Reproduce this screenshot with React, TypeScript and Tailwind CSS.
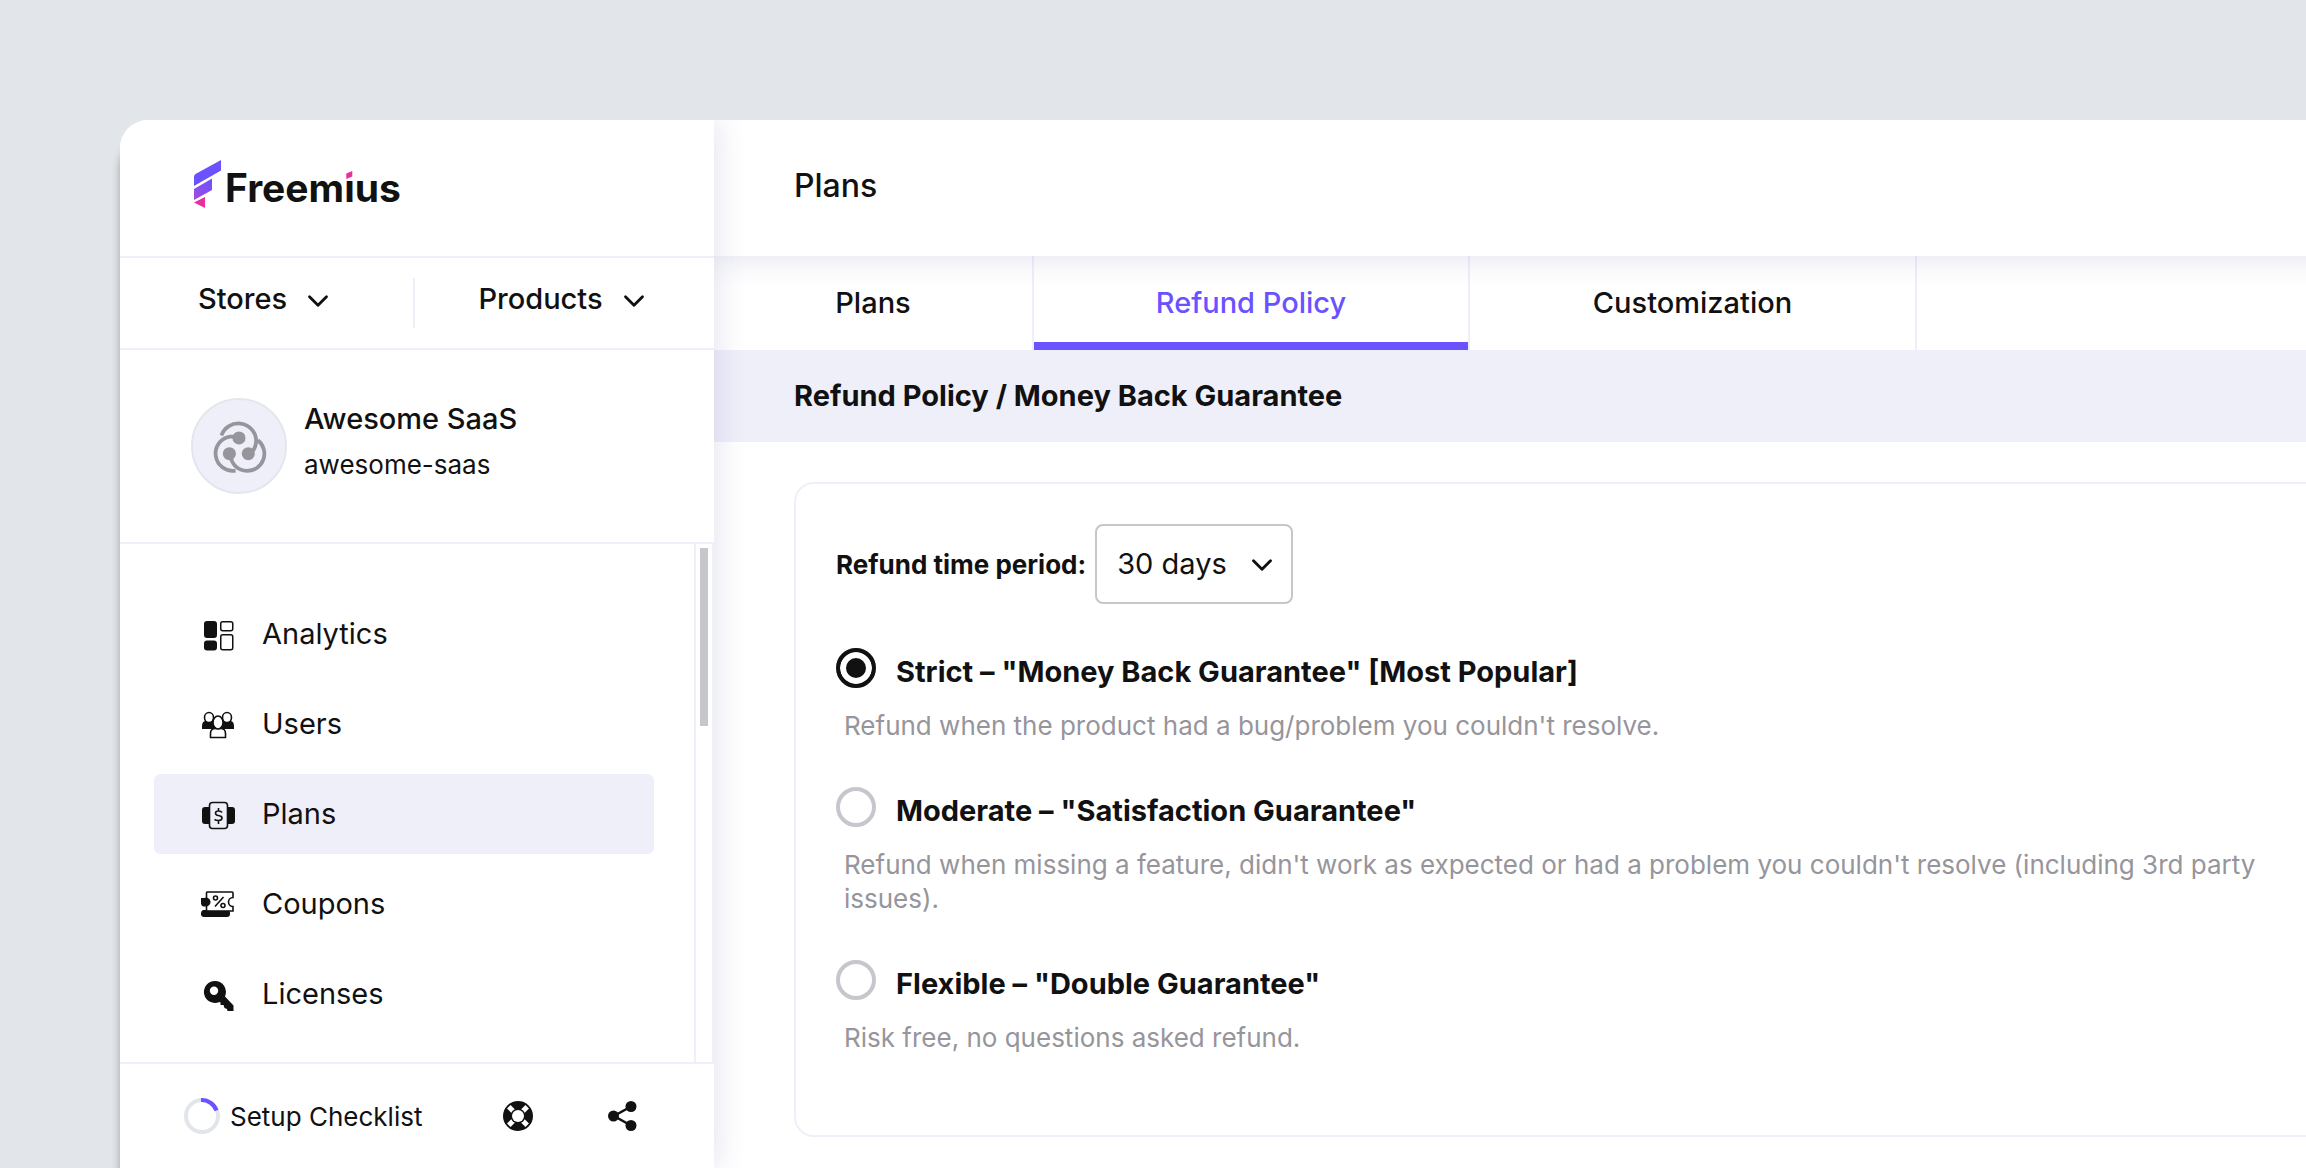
import React, { useState } from 'react';
import { ChevronDown } from 'lucide-react';

const AnalyticsIcon = () => (
  <svg viewBox="0 0 32 32" className="size-8" fill="none" stroke="#111" strokeWidth="1.5">
    <rect x="2" y="1" width="13" height="17" rx="3" fill="#111" stroke="none" />
    <rect x="2" y="20.5" width="13" height="10" rx="3" fill="#111" stroke="none" />
    <rect x="18.75" y="1.75" width="12" height="9" rx="2" />
    <rect x="18.75" y="14.75" width="12" height="15" rx="2" />
  </svg>
);

const UsersIcon = () => (
  <svg viewBox="0 0 32 32" className="size-8" fill="none" stroke="#111" strokeWidth="1.6">
    <path d="M0 19v-3q0-5 4-5h24q4 0 4 5v3z" fill="#111" stroke="none" />
    <ellipse cx="7" cy="7.5" rx="4.5" ry="5" fill="#fff" />
    <ellipse cx="25" cy="7.5" rx="4.5" ry="5" fill="#fff" />
    <path d="M8.500 27.500v-4q0-5 5-5h5q5 0 5 5v4z" fill="#fff" />
    <ellipse cx="16" cy="12.500" rx="5" ry="6.500" fill="#fff" />
  </svg>
);

const PlansIcon = () => (
  <svg viewBox="0 0 32 32" className="size-8 overflow-visible" fill="none" stroke="#111" strokeWidth="1.6">
    <rect x="0" y="7" width="12" height="17" rx="3" fill="#111" stroke="none" />
    <rect x="21" y="7" width="12" height="17" rx="3" fill="#111" stroke="none" />
    <rect x="7.500" y="2.500" width="18" height="26" rx="3" fill="#efeffa" />
    <path d="M16.500 8v3M16.500 20v4M20 12.500Q19 11 16.500 11 13.500 11 13.500 13.200 13.500 15 16.500 15.500 20 16 20 18 20 20.500 16.500 20.500 14 20.500 12.500 19.500" />
  </svg>
);

const CouponsIcon = () => (
  <svg viewBox="0 0 32 32" className="size-8 overflow-visible" fill="none" stroke="#111" strokeWidth="1.6">
    <path d="M1 20h24q3 0 3 3v1q0 3-3 3H2q-3 0-3-3v-1q0-2 2-3z" fill="#111" stroke="none" />
    <path d="M5 2h25q1 0 1 1v4.500a4.500 4.500 0 0 0 0 9V21H4.500V3q0-1 .5-1z" fill="#fff" />
    <path d="M-1 8h3a4.500 4.500 0 1 1 2 8.500H1q-2-1-2-3z" fill="#111" stroke="none" />
    <circle cx="13.500" cy="8" r="2" />
    <circle cx="21" cy="15.500" r="2" />
    <path d="M21.500 7 13 16.500" />
  </svg>
);

const LicensesIcon = () => (
  <svg viewBox="0 0 32 32" className="size-8">
    <path
      d="M13 1a11 11 0 1 0 4.500 21l1 .5V25h3l1 3 2.500 1 .5 2h6v-5.500L23 16.500A11 11 0 0 0 13 1zm-1 5.500a4.200 4.200 0 1 1 0 8.400 4.200 4.200 0 0 1 0-8.400z"
      fill="#111"
      fillRule="evenodd"
    />
  </svg>
);

const ProductLogo = () => (
  <svg viewBox="76 82 168 160" className="h-[55px] w-[58px] overflow-visible" fill="none" stroke="#96959b" strokeWidth="11">
    <path d="M109 130A52 52 0 0 1 210 143q0 27-20 42" />
    <path d="M160 133H134A50 50 0 1 0 150 232" />
    <path d="M215 144A50 50 0 0 1 184 233Q142 231 134 186" />
    <g fill="#96959b" stroke="none">
      <circle cx="160" cy="137" r="19" />
      <circle cx="132" cy="183" r="19" />
      <circle cx="187" cy="183" r="19" />
    </g>
  </svg>
);

const SupportIcon = () => (
  <svg viewBox="0 0 32 32" className="size-8">
    <circle cx="16" cy="16" r="15" fill="#111" />
    <path
      d="M6.800 6.800 11.500 11.500M25.200 6.800 20.500 11.500M6.800 25.200 11.500 20.500M25.200 25.200 20.500 20.500"
      stroke="#fff"
      strokeWidth="5"
    />
    <circle cx="16" cy="16" r="7.500" fill="#111" />
    <circle cx="16" cy="16" r="6" fill="#fff" />
  </svg>
);

const ShareIcon = () => (
  <svg viewBox="0 0 32 32" className="size-8" fill="#111">
    <path d="M25 6.500 8 16l17 9.500" fill="none" stroke="#111" strokeWidth="2.500" />
    <circle cx="25" cy="6.500" r="5.500" />
    <circle cx="7.500" cy="16" r="5.500" />
    <circle cx="25" cy="25.500" r="5.500" />
  </svg>
);

const FreemiusMark = () => (
  <svg viewBox="0 0 27 48" className="h-12 w-[27px]">
    <defs>
      <linearGradient id="mark" x1="1" y1="0" x2="0" y2="1">
        <stop offset="0" stopColor="#6b52ff" />
        <stop offset="1" stopColor="#a04be0" />
      </linearGradient>
    </defs>
    <path d="M0 16.500Q0 15 1.500 14L27 0v10.500L0 26z" fill="#6b52ff" />
    <path d="M0 29 18 18.500V30L0 40z" fill="url(#mark)" />
    <path d="M0 42.500 11 37v11z" fill="#ea2e9c" />
  </svg>
);

const navItems = [
  { name: 'Analytics', icon: AnalyticsIcon },
  { name: 'Users', icon: UsersIcon },
  { name: 'Plans', icon: PlansIcon },
  { name: 'Coupons', icon: CouponsIcon },
  { name: 'Licenses', icon: LicensesIcon },
];

const tabs = [
  { name: 'Plans', width: 'min-w-80' },
  { name: 'Refund Policy', width: 'min-w-[436px]' },
  { name: 'Customization', width: 'min-w-[447px]' },
];

const policies = [
  {
    id: 'strict',
    title: 'Strict – "Money Back Guarantee" [Most Popular]',
    description: "Refund when the product had a bug/problem you couldn't resolve.",
  },
  {
    id: 'moderate',
    title: 'Moderate – "Satisfaction Guarantee"',
    description:
      "Refund when missing a feature, didn't work as expected or had a problem you couldn't resolve (including 3rd party issues).",
  },
  {
    id: 'flexible',
    title: 'Flexible – "Double Guarantee"',
    description: 'Risk free, no questions asked refund.',
  },
];

const Sidebar: React.FC = () => (
  <aside className="relative z-20 flex w-[594px] shrink-0 flex-col bg-white shadow-[0_0_30px_rgba(70,70,150,0.18)]">
    {/* Logo */}
    <div className="flex h-[138px] items-center border-b-2 border-[#efeffa] pl-[74px]">
      <a href="#" className="flex items-center gap-1 pb-2">
        <FreemiusMark />
        <span className="pt-1.5 text-[39px] leading-none font-bold">
          Freem
          <span className="relative">
            i
            {/* Pink slanted dot over the letter */}
            <svg viewBox="0 0 10 10" className="absolute top-[6px] left-0 h-2.5 w-full">
              <rect width="10" height="10" fill="#fff" />
              <path d="M2 3.500 8 1v5.500L2 9z" fill="#ea2e9c" />
            </svg>
          </span>
          us
        </span>
      </a>
    </div>

    {/* Switchers */}
    <div className="flex h-[92px] border-b-2 border-[#efeffa] py-5">
      <button className="flex w-[295px] items-center justify-center gap-3.5 border-r-2 border-[#efeffa] pb-2 text-[29px] font-medium">
        Stores
        <ChevronDown size={34} strokeWidth={2} className="mt-1" />
      </button>
      <button className="flex flex-1 items-center justify-center gap-3.5 pb-2 text-[29px] font-medium">
        Products
        <ChevronDown size={34} strokeWidth={2} className="mt-1" />
      </button>
    </div>

    {/* Current product */}
    <div className="flex h-[194px] items-center gap-[17px] border-b-2 border-[#efeffa] pl-[71px]">
      <div className="flex size-24 items-center justify-center rounded-full border-2 border-[#e4e6ee] bg-[#efeffa]">
        <ProductLogo />
      </div>
      <div className="pb-2">
        <p className="pb-1.5 text-[29px] leading-10 font-medium">Awesome SaaS</p>
        <p className="text-[26px] leading-10">awesome-saas</p>
      </div>
    </div>

    {/* Navigation */}
    <div className="flex flex-1">
      <nav className="flex flex-1 flex-col gap-2.5 pt-[50px] pr-10 pl-[34px]">
        {navItems.map((item) => (
          <a
            key={item.name}
            href="#"
            className={`flex h-20 items-center gap-7 rounded-md pl-12 text-[29px] ${item.name === 'Plans' ? 'bg-[#efeffa]' : ''}`}
          >
            <span className="pt-[3px]">
              <item.icon />
            </span>
            {item.name}
          </a>
        ))}
      </nav>
      <div className="w-5 border-x-2 border-[#efeffa] px-1 pt-1">
        <div className="h-[178px] w-2 bg-[#c6c6cd]" />
      </div>
    </div>

    {/* Footer */}
    <div className="flex h-[106px] items-center border-t-2 border-[#efeffa] pr-[76px] pl-16">
      <a href="#" className="flex items-center gap-2.5 text-[26px]">
        <svg viewBox="0 0 36 36" className="size-9" fill="none" strokeWidth="4">
          <circle cx="18" cy="18" r="16" stroke="#e2e6ea" />
          <path d="M17 2A16 16 0 0 1 32.500 12.500" stroke="#6b52ff" />
        </svg>
        Setup Checklist
      </a>
      <div className="ml-auto flex gap-[72px]">
        <button aria-label="Support"><SupportIcon /></button>
        <button aria-label="Share"><ShareIcon /></button>
      </div>
    </div>
  </aside>
);

const App: React.FC = () => {
  const [policy, setPolicy] = useState('strict');

  return (
    <div className="min-h-screen overflow-hidden bg-[#e2e6ea] pt-30 pl-30 font-[Inter,sans-serif] text-[#111]">
      {/* The window runs past the right edge of the page */}
      <div className="-mr-[100px] flex min-h-[calc(100vh-120px)] overflow-hidden rounded-tl-[28px] bg-white shadow-[0_20px_8px_rgba(0,0,0,0.3)]">
        <Sidebar />

        <main className="min-w-0 flex-1">
          <header className="relative z-10 flex h-[136px] items-center bg-white pb-1 pl-20 shadow-[0_0_30px_rgba(70,70,150,0.18)]">
            <h1 className="text-[32px] font-medium">Plans</h1>
          </header>

          {/* Tabs */}
          <div className="flex h-[94px]">
            {tabs.map((tab) => (
              <button
                key={tab.name}
                className={`border-r-2 border-[#efeffa] text-[29px] font-medium ${tab.width} ${
                  tab.name === 'Refund Policy' ? 'text-[#6b52ff] shadow-[inset_0_-8px_0_#6b52ff]' : ''
                }`}
              >
                {tab.name}
              </button>
            ))}
          </div>

          <h2 className="flex h-[92px] items-center bg-[#efeffa] pl-20 text-[29px] font-bold">
            Refund Policy / Money Back Guarantee
          </h2>

          <section className="mx-20 mt-10 rounded-[20px] border-2 border-[#efeffa] px-10 pt-10 pb-20">
            <div className="flex items-center gap-[9px]">
              <label htmlFor="period" className="text-[26px] font-bold">Refund time period:</label>
              <div className="relative">
                <select
                  id="period"
                  className="h-20 w-[198px] appearance-none rounded-lg border-2 border-[#c6c6cd] bg-white pl-5 text-[29px]"
                >
                  <option>30 days</option>
                </select>
                <ChevronDown size={34} strokeWidth={2} className="pointer-events-none absolute top-6 right-3.5" />
              </div>
            </div>

            {policies.map((item) => (
              <div key={item.id} className="mt-11">
                <div className="flex gap-5">
                  <input
                    type="radio"
                    name="policy"
                    id={item.id}
                    checked={policy === item.id}
                    onChange={() => setPolicy(item.id)}
                    className="size-10 shrink-0 appearance-none rounded-full border-4 border-[#c6c6cd] checked:border-[#111] checked:bg-[#111] checked:shadow-[inset_0_0_0_6px_#fff]"
                  />
                  <label htmlFor={item.id} className="text-[29px] leading-12 font-bold">{item.title}</label>
                </div>
                <p className="mt-[13px] pl-2 text-[26px] leading-[34px] text-[#96959b]">{item.description}</p>
              </div>
            ))}
          </section>
        </main>
      </div>
    </div>
  );
};

export default App;
